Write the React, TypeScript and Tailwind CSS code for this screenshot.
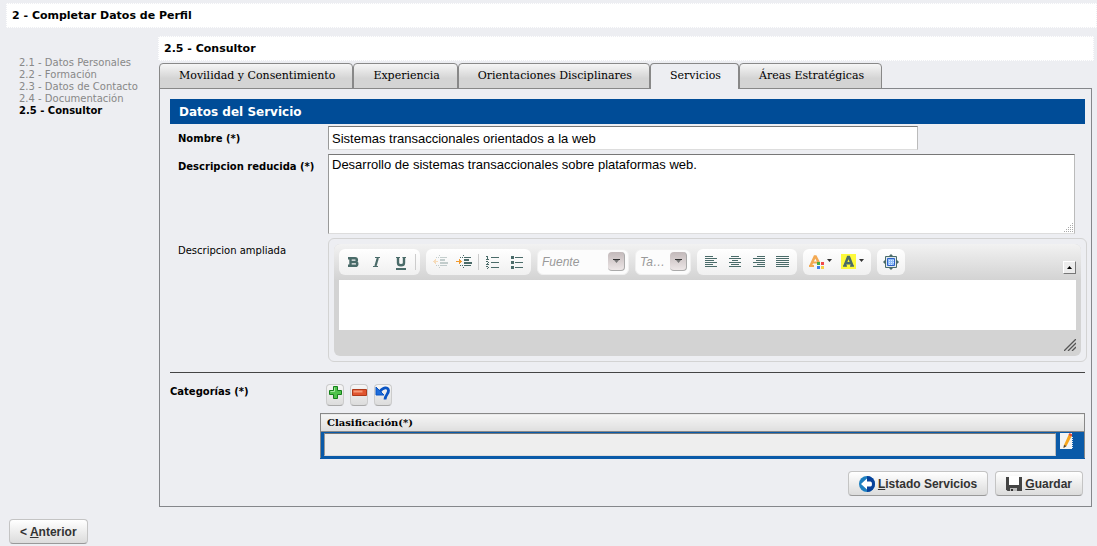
import type { ReactNode } from "react";

const steps = [
  { label: "2.1 - Datos Personales", current: false },
  { label: "2.2 - Formación", current: false },
  { label: "2.3 - Datos de Contacto", current: false },
  { label: "2.4 - Documentación", current: false },
  { label: "2.5 - Consultor", current: true },
];

const tabs = ["Movilidad y Consentimiento", "Experiencia", "Orientaciones Disciplinares", "Servicios", "Áreas Estratégicas"];

const ink = "#4a6b69";

function Group({ children }: { children: ReactNode }) {
  return <div className="flex h-[26px] items-center rounded-md bg-linear-to-b from-white to-[#f0f0f0] px-0.5">{children}</div>;
}

function Tool({ label, children, wide }: { label: string; children: ReactNode; wide?: boolean }) {
  return (
    <button type="button" aria-label={label} className={wide ? "flex h-6 w-8 items-center justify-center" : "flex h-6 w-6 items-center justify-center"}>
      {children}
    </button>
  );
}

function Separator() {
  return <span className="mx-0.5 h-4 w-px bg-[#ccc]" />;
}

function BoldIcon() {
  return (
    <svg width="16" height="16" viewBox="0 0 16 16" fill="none" stroke={ink} strokeWidth="2.4">
      <path d="M5.500 3v10M3 4.200H10a1.900 1.900 0 0 1 0 3.800H5M10 8h.4a1.900 1.900 0 0 1 0 3.800H3" />
    </svg>
  );
}

function ItalicIcon() {
  return (
    <svg width="16" height="16" viewBox="0 0 16 16" fill="none" stroke={ink}>
      <path d="M6 3.500h5M4 12.500h5" />
      <path d="M8.800 4L6.500 12" strokeWidth="2.200" />
    </svg>
  );
}

function UnderlineIcon() {
  return (
    <svg width="16" height="16" viewBox="0 0 16 16" fill="none" stroke={ink}>
      <path d="M5 3v6q0 2.300 3 2.300t3-2.300V3" strokeWidth="2.400" />
      <path d="M3 3.500h4M9.500 3.500h3.500" />
      <path d="M3 15h10" strokeWidth="2" />
    </svg>
  );
}

function IndentIcon({ back }: { back?: boolean }) {
  return (
    <svg width="16" height="16" viewBox="0 0 16 16" shapeRendering="crispEdges" opacity={back ? 0.3 : 1}>
      <path d="M4 3h1v1H4zM6 3h1v1H6zM7 1h1v1H7zM8 3h7v1H8zM8 5h5v2H8zM8 8h8v2H8zM8 11h7v1H8zM4 11h1v1H4zM6 11h1v1H6zM7 13h1v1H7z" fill={ink} />
      {back ? <path d="M1 7h5v1H1zM2 6h1v3H2zM3 5h1v5H3z" fill="#f29a2e" /> : <path d="M0 7h6v1H0zM4 6h1v3H4zM3 5h1v5H3z" fill="#f29a2e" />}
    </svg>
  );
}

function NumberedIcon() {
  return (
    <svg width="16" height="16" viewBox="0 0 16 16" shapeRendering="crispEdges" fill={ink}>
      <path d="M6 3h8v1H6zM6 8h8v1H6zM6 13h8v1H6z" />
      <path d="M1 2h2v1H1zM2 3h1v2H2zM1 5h3v1H1zM1 7h2v1H1zM3 8h1v1H3zM2 9h1v1H2zM1 10h3v1H1zM1 12h2v1H1zM3 13h1v1H3zM2 14h1v1H2z" />
    </svg>
  );
}

function BulletsIcon() {
  return (
    <svg width="16" height="16" viewBox="0 0 16 16" shapeRendering="crispEdges" fill={ink}>
      <path d="M2 2h3v3H2zM2 7h3v3H2zM2 12h3v3H2zM6 3h8v1H6zM6 8h8v1H6zM6 13h8v1H6z" />
    </svg>
  );
}

const alignPaths = {
  left: "M2 2h8v1H2zM2 4h12v1H2zM2 6h9v1H2zM2 8h12v1H2zM2 10h8v1H2zM2 12h12v1H2z",
  center: "M4 2h8v1H4zM2 4h12v1H2zM5 6h6v1H5zM2 8h12v1H2zM4 10h8v1H4zM2 12h12v1H2z",
  right: "M6 2h8v1H6zM2 4h12v1H2zM5 6h9v1H5zM2 8h12v1H2zM6 10h8v1H6zM2 12h12v1H2z",
  justify: "M1 2h13v1H1zM1 4h13v1H1zM1 6h13v1H1zM1 8h13v1H1zM1 10h13v1H1zM1 12h13v1H1z",
};

function AlignIcon({ kind }: { kind: keyof typeof alignPaths }) {
  return (
    <svg width="16" height="16" viewBox="0 0 16 16" shapeRendering="crispEdges" fill={ink}>
      <path d={alignPaths[kind]} />
    </svg>
  );
}

function TextColorIcon() {
  return (
    <svg width="24" height="16" viewBox="0 0 24 16">
      <path d="M1.500 12L5.800 2.500h.8L10 9" fill="none" stroke="#f3a953" strokeWidth="2.600" />
      <path d="M3 8.500h6M0 12h5" fill="none" stroke="#f3a953" strokeWidth="2" />
      <path d="M8 8h3v3H8z" fill="#4caf3f" />
      <path d="M12 8h3v3h-3z" fill="#f04a4a" />
      <path d="M8 12h3v3H8z" fill="#3b7be8" />
      <path d="M12 12h3v3h-3z" fill="#f5cf45" />
      <path d="M18 5h5l-2.500 3z" fill="#333" />
    </svg>
  );
}

function BackColorIcon() {
  return (
    <svg width="24" height="16" viewBox="0 0 24 16">
      <path d="M0 0h15v15H0z" fill="#fdf93b" />
      <path d="M3.500 12L7 3h1l3.500 9M4.500 9.200h6" fill="none" stroke={ink} strokeWidth="2.500" />
      <path d="M2 12h4M9 12h4" stroke={ink} strokeWidth="1.500" />
      <path d="M18 5h5l-2.500 3z" fill="#333" />
    </svg>
  );
}

function MaximizeIcon() {
  return (
    <svg width="16" height="16" viewBox="0 0 16 16">
      <path d="M2.500 2.500h11v11h-11z" fill="#dfe9ee" stroke={ink} />
      <path d="M6 2l2-2 2 2zM6 14l2 2 2-2zM2 6L0 8l2 2zM14 6l2 2-2 2z" fill={ink} />
      <path d="M4.500 4.500h7v7h-7z" fill="#8dbcf8" stroke="#2f62c8" />
      <path d="M6 6h1v1H6zM8 6h1v1H8zM10 6h1v1h-1zM6 8h1v1H6zM8 8h1v1H8zM10 8h1v1h-1zM6 10h1v1H6zM8 10h1v1H8z" fill="#d8eaff" />
    </svg>
  );
}

function ToolbarSelect({ label, text, narrow }: { label: string; text: string; narrow?: boolean }) {
  return (
    <div className="relative h-[26px]">
      <select
        aria-label={label}
        className={
          narrow
            ? "h-[26px] w-14 appearance-none rounded-md border border-[#f0f0f0] bg-[#fcfcfc] pl-1 text-[12px] text-[#999] italic"
            : "h-[26px] w-[92px] appearance-none rounded-md border border-[#f0f0f0] bg-[#fcfcfc] pl-1 text-[12px] text-[#999] italic"
        }
      >
        <option>{text}</option>
      </select>
      <span className="pointer-events-none absolute top-[3px] right-1 flex h-[19px] w-[17px] items-center justify-center rounded-sm border-r border-b border-[#aaa] bg-linear-to-b from-[#c3b9ba] to-[#ede7e7]">
        <svg width="7" height="4" viewBox="0 0 7 4">
          <path d="M0 0h7v1H0z" fill="#333" />
          <path d="M1 1h5L3.500 4z" fill="#777" />
        </svg>
      </span>
    </div>
  );
}

function Editor() {
  return (
    <div className="rounded-md border border-[#d3d3d3] p-[5px]">
      <div className="rounded-md bg-[#d3d3d3]">
        <div className="flex h-9 items-start justify-between rounded-t-md bg-linear-to-b from-[#f2f2f2] to-[#d3d3d3] px-[5px] pt-[5px]">
          <div className="flex gap-1.5">
            <Group>
              <Tool label="Negrita"><BoldIcon /></Tool>
              <Tool label="Cursiva"><ItalicIcon /></Tool>
              <Tool label="Subrayado"><UnderlineIcon /></Tool>
              <Separator />
            </Group>
            <Group>
              <Tool label="Disminuir sangría"><IndentIcon back /></Tool>
              <Tool label="Aumentar sangría"><IndentIcon /></Tool>
              <Separator />
              <Tool label="Numeración"><NumberedIcon /></Tool>
              <Tool label="Viñetas"><BulletsIcon /></Tool>
            </Group>
            <ToolbarSelect label="Fuente" text="Fuente" />
            <ToolbarSelect label="Tamaño" text="Ta…" narrow />
            <Group>
              <Tool label="Alinear a izquierda"><AlignIcon kind="left" /></Tool>
              <Tool label="Centrar"><AlignIcon kind="center" /></Tool>
              <Tool label="Alinear a derecha"><AlignIcon kind="right" /></Tool>
              <Tool label="Justificado"><AlignIcon kind="justify" /></Tool>
            </Group>
            <Group>
              <Tool label="Color de texto" wide><TextColorIcon /></Tool>
              <Tool label="Color de fondo" wide><BackColorIcon /></Tool>
            </Group>
            <Group>
              <Tool label="Maximizar"><MaximizeIcon /></Tool>
            </Group>
          </div>
          <button type="button" aria-label="Contraer barra" className="mt-3 flex h-[13px] w-[13px] items-center justify-center border border-t-white border-r-[#777] border-b-[#777] border-l-white bg-[#ececec]">
            <svg width="5" height="3" viewBox="0 0 5 3"><path d="M0 3h5L2.500 0z" fill="#000" /></svg>
          </button>
        </div>
        <div className="px-[5px]">
          <textarea id="ampliada" className="block h-[50px] w-full resize-none bg-white p-2 text-[13px] outline-none" />
        </div>
        <div className="flex h-[26px] items-end justify-end px-[5px] pb-[5px]">
          <svg width="12" height="12" viewBox="0 0 12 12" stroke="#555" strokeWidth="1.300">
            <path d="M0 12L12 0M4 12l8-8M8 12l4-4" />
          </svg>
        </div>
      </div>
    </div>
  );
}

function SmallButton({ label, children }: { label: string; children: ReactNode }) {
  return (
    <button type="button" aria-label={label} className="flex h-[22px] w-[18px] justify-center rounded-sm border border-[#ccc] border-b-[#aaa] bg-linear-to-b from-[#f6f6f6] to-[#dcdcdc]">
      {children}
    </button>
  );
}

function ActionButton({ icon, hotkey, children, before }: { icon?: ReactNode; hotkey: string; children: ReactNode; before?: string }) {
  return (
    <button type="button" className="flex h-[25px] items-center gap-[3px] rounded-sm border border-[#c4c4c4] border-b-[#999] bg-linear-to-b from-white to-[#dcdcdc] px-2.5 text-[12px] font-bold text-[#333]">
      {icon}
      <span>
        {before}
        <span className="underline">{hotkey}</span>
        {children}
      </span>
    </button>
  );
}

function BackIcon() {
  return (
    <svg width="16" height="16" viewBox="0 0 16 16">
      <circle cx="8" cy="8" r="8" fill="#1d7fc0" />
      <path d="M8 0a8 8 0 0 1 0 16z" fill="#07419a" />
      <path d="M2 8l6-5.500V5.500h3.500q1.500 0 1.500 2.500t-1.500 2.500H8v3z" fill="#fff" />
    </svg>
  );
}

function SaveIcon() {
  return (
    <svg width="16" height="16" viewBox="0 0 16 16">
      <path d="M0 1h16v14H1.500L0 13.500z" fill="#444" />
      <path d="M3 0h10v9H3z" fill="#fff" />
      <path d="M4 12h7v3H4z" fill="#bbb" />
      <path d="M5 13h2v2H5z" fill="#333" />
    </svg>
  );
}

export default function App() {
  return (
    <div className="min-h-screen bg-[#edeef2] pt-[3px] font-['DejaVu_Sans',sans-serif] text-[10px] text-black">
      <h1 className="ml-1.5 flex h-[25px] items-center border border-dotted border-[#edeef2] bg-white px-[5px] pt-0.5 text-[11px] font-bold">2 - Completar Datos de Perfil</h1>

      <div className="mt-2 flex">
        <nav className="w-[158px] shrink-0 pt-[21px] pl-[19px] leading-3">
          <ul>
            {steps.map((s) => (
              <li key={s.label}>
                {s.current ? <b>{s.label}</b> : <a href="#" className="text-[#888]">{s.label}</a>}
              </li>
            ))}
          </ul>
        </nav>

        <main className="min-w-0 grow pr-[3px]">
          <h2 className="flex h-[25px] items-center border border-dotted border-[#edeef2] bg-white px-[5px] pt-0.5 text-[11px] font-bold">2.5 - Consultor</h2>

          <div className="mt-0.5 mr-0.5 ml-px">
            <div role="tablist" className="-mb-px flex font-['DejaVu_Serif',serif] text-[11px]">
              {tabs.map((t) => (
                <button
                  key={t}
                  type="button"
                  role="tab"
                  aria-selected={t === "Servicios"}
                  className={
                    t === "Servicios"
                      ? "relative h-[26px] rounded-t-sm border border-b-0 border-[#888] bg-[#edeef2] pr-[17px] pb-px pl-[19px]"
                      : "h-[26px] rounded-t-sm border border-[#888] bg-linear-to-b from-[#f6f6f6] to-[#d4d4d4] to-60% pr-[17px] pl-[19px]"
                  }
                >
                  {t}
                </button>
              ))}
            </div>

            <form className="border border-[#85878b] pt-2.5 pr-1.5 pb-2.5 pl-2.5" onSubmit={(e) => e.preventDefault()}>
              <h3 className="flex h-[25px] items-center bg-[#004c97] px-[9px] text-[12px] font-bold text-white">Datos del Servicio</h3>

              <div className="mt-0.5 grid grid-cols-[150px_1fr] gap-y-1 pl-2">
                <label htmlFor="nombre" className="pt-[5px] font-bold">Nombre (*)</label>
                <input
                  id="nombre"
                  defaultValue="Sistemas transaccionales orientados a la web"
                  className="h-6 w-[78%] border border-t-[#777] border-r-[#bbb] border-b-[#ddd] border-l-[#999] bg-white px-[3px] font-['Liberation_Sans',sans-serif] text-[13px] outline-none"
                />
                <label htmlFor="reducida" className="pt-[5px] font-bold">Descripcion reducida (*)</label>
                <div className="relative mr-2.5">
                  <textarea
                    id="reducida"
                    defaultValue="Desarrollo de sistemas transaccionales sobre plataformas web."
                    className="block h-20 w-full resize-none border border-t-[#777] border-r-[#bbb] border-b-[#ddd] border-l-[#999] bg-white px-[3px] pt-0.5 font-['Liberation_Sans',sans-serif] text-[13px] leading-4 outline-none"
                  />
                  <svg className="absolute right-0.5 bottom-0.5" width="9" height="9" viewBox="0 0 9 9" fill="#aaa" shapeRendering="crispEdges">
                    <path d="M8 0h1v1H8zM8 2h1v1H8zM6 2h1v1H6zM8 4h1v1H8zM6 4h1v1H6zM4 4h1v1H4zM8 6h1v1H8zM6 6h1v1H6zM4 6h1v1H4zM2 6h1v1H2zM8 8h1v1H8zM6 8h1v1H6zM4 8h1v1H4zM2 8h1v1H2zM0 8h1v1H0z" />
                  </svg>
                </div>
                <label htmlFor="ampliada" className="pt-[5px]">Descripcion ampliada</label>
                <div className="-mr-0.5 font-['Liberation_Sans',sans-serif]">
                  <Editor />
                </div>
              </div>

              <hr className="mt-2.5 border-t border-[#444]" />

              <div className="mt-[11px] grid grid-cols-[150px_1fr]">
                <span className="font-bold">Categorías (*)</span>
                <div>
                  <div className="flex gap-1.5 pl-1.5">
                    <SmallButton label="Agregar">
                      <svg width="15" height="15" viewBox="0 0 15 15">
                        <path d="M5.500 1.500h4v4h4v4h-4v4h-4v-4h-4v-4h4z" fill="#4fc24b" stroke="#15801a" />
                        <path d="M6.500 2.500v4h-4" fill="none" stroke="#a5e8a0" />
                      </svg>
                    </SmallButton>
                    <SmallButton label="Quitar">
                      <svg width="15" height="15" viewBox="0 0 15 15">
                        <path d="M.5 4.500h14v6H.5z" fill="#e0552f" stroke="#b03a1a" />
                        <path d="M1.500 5.500h9v2h-9z" fill="#f49a78" />
                      </svg>
                    </SmallButton>
                    <SmallButton label="Deshacer">
                      <svg width="16" height="16" viewBox="0 0 16 16" fill="none" stroke="#0b55c4">
                        <path d="M4.500 7C8 2 13 1.500 13.500 5.500c.2 3.500-3.500 4.500-3.500 9" strokeWidth="2.800" />
                        <path d="M1 2v8h8z" fill="#1d6ddb" strokeWidth="1" />
                      </svg>
                    </SmallButton>
                  </div>

                  <table className="mt-[7px] w-full border-collapse border border-[#888]">
                    <thead>
                      <tr>
                        <th colSpan={2} className="h-[18px] border-b border-[#888] bg-linear-to-b from-[#f6f6f6] to-[#dedede] px-1.5 text-left font-['DejaVu_Serif',serif] text-[10px] leading-4">
                          Clasificación(*)
                        </th>
                      </tr>
                    </thead>
                    <tbody>
                      <tr className="border-b border-[#0a5aa8] bg-[#0a5aa8]">
                        <td className="pt-px pb-0.5 pl-[3px]">
                          <input aria-label="Clasificación" readOnly className="block h-[23px] w-full border border-t-[#777] border-r-[#bbb] border-b-[#ddd] border-l-[#999] bg-[#eee] px-1 outline-none" />
                        </td>
                        <td className="w-[29px] pl-1 align-top">
                          <button type="button" aria-label="Editar" className="mt-px block">
                            <svg width="13" height="16" viewBox="0 0 13 16">
                              <path d="M0 0h12v16H0z" fill="#f4f4f4" />
                              <path d="M12.500 4v12" stroke="#dde8f5" strokeDasharray="1 1" />
                              <path d="M4 12L9 1l3 1.500L6.500 13l-3 2z" fill="#f7a51c" />
                              <path d="M9 1l3 1.500" stroke="#e0503a" strokeWidth="2" />
                              <path d="M3.500 15l.5-3 2.500 1z" fill="#444" />
                            </svg>
                          </button>
                        </td>
                      </tr>
                    </tbody>
                  </table>
                </div>
              </div>

              <div className="mt-3 mr-0.5 flex justify-end gap-[7px] font-['Liberation_Sans',sans-serif]">
                <ActionButton icon={<BackIcon />} hotkey="L">istado Servicios</ActionButton>
                <ActionButton icon={<SaveIcon />} hotkey="G">uardar</ActionButton>
              </div>
            </form>
          </div>
        </main>
      </div>

      <div className="mt-3 ml-[9px] flex font-['Liberation_Sans',sans-serif]">
        <ActionButton before="< " hotkey="A">nterior</ActionButton>
      </div>
    </div>
  );
}
